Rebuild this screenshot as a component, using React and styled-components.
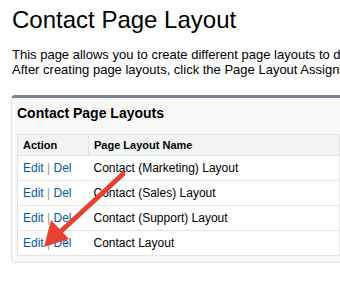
import styled, { createGlobalStyle } from "styled-components";

const GlobalStyle = createGlobalStyle`
  html, body {
    margin: 0;
    background: #fff;
    overflow: hidden;
  }
  body {
    font-family: "Liberation Sans", Arial, sans-serif;
    color: #000;
  }
`;

const Page = styled.div`
  position: relative;
  width: 340px;
  height: 294px;
  overflow: hidden;
`;

const Title = styled.h1`
  margin: 6px 0 0 12px;
  font-size: 24px;
  font-weight: normal;
  line-height: 27px;
`;

const Intro = styled.p`
  margin: 14px 0 0 12px;
  font-size: 13px;
  line-height: 15px;
  white-space: nowrap;
`;

const Panel = styled.section`
  margin: 18px 0 0 11px;
  width: 420px;
  background: #f8f8f8;
  border: 1px solid #e6e6e6;
  border-top: 3px solid #7a8399;
  border-radius: 4px;
  padding: 0 0 6px 5px;
`;

const PanelTitle = styled.h2`
  margin: 7px 0 12px 0;
  font-size: 14px;
  font-weight: bold;
  line-height: 17px;
`;

const Table = styled.table`
  border-collapse: collapse;
  width: 420px;
  background: #fff;
  border: 1px solid #e0e3e5;
  font-size: 12px;
`;

const HeadCell = styled.th`
  height: 21px;
  padding: 0 5px;
  text-align: left;
  font-size: 11px;
  font-weight: bold;
  background: #f2f3f3;
  border-bottom: 1px solid #e0e3e5;
  border-right: 1px solid #e0e3e5;
  width: ${(p) => p.$w || "auto"};
  box-sizing: border-box;
`;

const Cell = styled.td`
  height: 24px;
  padding: 0 5px;
  border-bottom: 1px solid #e3e3e3;
  border-right: ${(p) => (p.$edge ? "1px solid #e3e3e3" : "none")};
  white-space: nowrap;
`;

const Link = styled.a`
  color: #015ba7;
  text-decoration: none;
`;

const Sep = styled.span`
  color: #999;
`;

const Arrow = styled.svg`
  position: absolute;
  left: 0;
  top: 0;
  pointer-events: none;
`;

const layouts = [
  "Contact (Marketing) Layout",
  "Contact (Sales) Layout",
  "Contact (Support) Layout",
  "Contact Layout",
];

export default function App() {
  return (
    <Page>
      <GlobalStyle />
      <Title>Contact Page Layout</Title>
      <Intro>
        This page allows you to create different page layouts to display different fields.
        <br />
        After creating page layouts, click the Page Layout Assignment button.
      </Intro>
      <Panel>
        <PanelTitle>Contact Page Layouts</PanelTitle>
        <Table>
          <thead>
            <tr>
              <HeadCell $w="71px">Action</HeadCell>
              <HeadCell $w="251px">Page Layout Name</HeadCell>
              <HeadCell />
            </tr>
          </thead>
          <tbody>
            {layouts.map((name) => (
              <tr key={name}>
                <Cell>
                  <Link href="#">Edit</Link> <Sep>|</Sep> <Link href="#">Del</Link>
                </Cell>
                <Cell $edge>{name}</Cell>
                <Cell />
              </tr>
            ))}
          </tbody>
        </Table>
      </Panel>
      <Arrow width="340" height="294" viewBox="0 0 340 294">
        <line x1="123" y1="174" x2="58" y2="234" stroke="#e8412f" strokeWidth="5" strokeLinecap="round" />
        <polygon points="44,247 51,220 69,239" fill="#e8412f" />
      </Arrow>
    </Page>
  );
}
